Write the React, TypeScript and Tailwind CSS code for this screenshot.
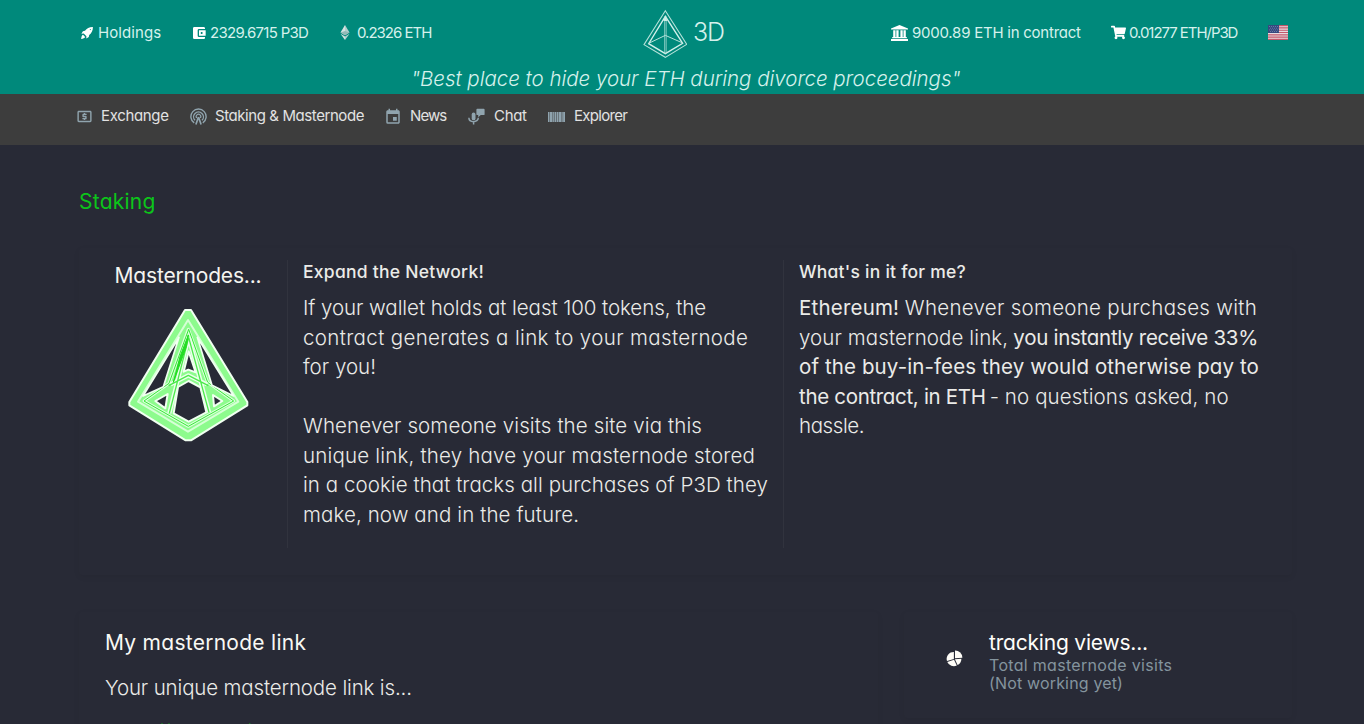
import type { ReactNode } from "react";
import { FaShoppingCart } from "react-icons/fa";
import { MdAccountBalanceWallet, MdEvent, MdLocalAtm } from "react-icons/md";

function RocketIcon() {
  return (
    <svg className="size-3 shrink-0" viewBox="0 0 12 12" fill="#fff">
      <path fillRule="evenodd" d="M11.900.1C8.500 0 5.700 1.400 4 3.800L1.900 4.200.4 6.700 2.700 6.600 5.400 9.300 5.300 11.600 7.800 10.100 8.200 8C10.600 6.300 12 3.500 11.900.1ZM9.300 2.100A.5.500 0 1 1 9.290 2.100Z" />
      <path d="M2 7.800C.8 8.300.4 9.800.1 11.900 2.200 11.600 3.700 11.200 4.200 10Z" />
    </svg>
  );
}

function BankIcon() {
  return (
    <svg className="h-[16px] w-[17px] shrink-0" viewBox="0 0 17 16" fill="#fff">
      <path d="M8.500 0 17 3.500V4.600H0V3.500ZM2.200 5.200H4.500V12H5.300V5.200H7.600V12H9.400V5.200H11.700V12H12.500V5.200H14.800V12H15.800V13.200H1.200V12H2.200ZM0 13.900H17V16H0Z" />
    </svg>
  );
}

function EthIcon() {
  return (
    <svg className="h-[15px] w-[10px] shrink-0" viewBox="0 0 10 15">
      <path d="M5 0 0.5 7.6 5 10.2Z" fill="#d5e3e2" />
      <path d="M5 0 9.500 7.600 5 10.200Z" fill="#b4d0ce" />
      <path d="M0.5 8.800 5 11.400V15Z" fill="#d5e3e2" />
      <path d="M9.500 8.800 5 11.400V15Z" fill="#b4d0ce" />
      <path d="M0.5 7.600 5 5.900 9.500 7.600 5 10.200Z" fill="#93bab7" />
    </svg>
  );
}

function PyramidLogo() {
  return (
    <svg className="h-[50px] w-[44px] shrink-0" viewBox="37 26 132 150" fill="none" stroke="#b5e2da" strokeLinejoin="miter">
      <path d="M104 31 40 133 104 171 168 132Z" strokeWidth="3.2" />
      <path d="M104 48 54 130 104 160 156 129Z" stroke="#d3f0eb" strokeWidth="4" />
      <path d="M102 48V160M106.500 48V160" strokeWidth="2.200" />
      <path d="M54 129 104 105 156 128" strokeWidth="3" />
      <path d="M98 62 104 46 110 62Z" fill="#cdeee8" stroke="none" />
    </svg>
  );
}

function FlagIcon() {
  return (
    <svg className="h-[15px] w-5 shrink-0" viewBox="0 0 20 15">
      <rect width="20" height="15" fill="#e9dbe0" />
      <path d="M0 .6H20M0 2.9H20M0 5.200H20M0 7.500H20M0 9.800H20M0 12.100H20M0 14.400H20" stroke="#c4586b" strokeWidth="1.15" />
      <rect width="11" height="8" fill="#36497f" />
      <path d="M1 1.500H10.500M2 3.200H10.500M1 4.900H10.500M2 6.500H10.500" stroke="#8b99be" strokeWidth=".6" strokeDasharray="1 1" />
    </svg>
  );
}

function BroadcastIcon() {
  return (
    <svg className="h-[17px] w-[17px] shrink-0" viewBox="0 0 17 17" fill="none" stroke="currentColor" strokeWidth="1.4">
      <path d="M4.200 14.900A7.600 7.600 0 1 1 12.800 14.900" />
      <path d="M5 12.300A4.900 4.900 0 1 1 12 12.300" />
      <path d="M6.700 10A2.300 2.300 0 1 1 10.300 10" strokeWidth="1.200" />
      <path d="M8.500 9 5.900 16.500M8.500 9 11.100 16.500" strokeWidth="1.700" />
    </svg>
  );
}

function VoiceChatIcon() {
  return (
    <svg className="h-[17px] w-[17px] shrink-0" viewBox="0 0 17 17" fill="currentColor">
      <rect x="3.700" y="4.500" width="3.800" height="7.800" rx="1.900" />
      <path d="M.9 9.800C.9 15 10.300 15 10.300 9.800M5.600 13.500V16.500" fill="none" stroke="currentColor" strokeWidth="1.500" />
      <path d="M9.300.8H15.700Q16.600.8 16.600 1.700V6.200Q16.600 7.100 15.700 7.100H12.800L10.200 9.300V7.100H9.300Q8.400 7.100 8.400 6.200V1.700Q8.400.8 9.300.8Z" />
    </svg>
  );
}

function BarcodeIcon() {
  return (
    <svg className="h-[10px] w-[17px] shrink-0" viewBox="0 0 17 10" fill="currentColor">
      <path d="M0 0H1V10H0ZM1.700 0H4.400V10H1.700ZM5.200 0H6.300V10H5.200ZM7 0H8.200V10H7ZM9 0H10V10H9ZM10.700 0H13V10H10.700ZM13.600 0H14.600V10H13.600ZM15.200 0H17V10H15.200Z" />
      <rect width="17" height="10" opacity=".35" />
    </svg>
  );
}

function PieIcon() {
  return (
    <svg className="h-[17px] w-[17px] shrink-0" viewBox="0 0 17 17" fill="#fffdf8">
      <path d="M7.900 1.900V9L1 11.100A7 7 0 0 1 7.900 1.900Z" />
      <path d="M9 .6A7.200 7.200 0 0 1 16.400 7.700L9 8.300Z" />
      <path d="M1.300 11.900 8 9.800 10.800 15.500A7.200 7.200 0 0 1 1.300 11.900Z" />
      <path d="M8.900 9.300 15.400 8.700A7.200 7.200 0 0 1 11.600 15Z" />
    </svg>
  );
}

function MasternodeEmblem() {
  return (
    <svg className="h-[136px] w-[122px]" viewBox="80 171 366 408" strokeLinejoin="round">
      <path
        fillRule="evenodd"
        fill="#8dfb8d"
        stroke="#f1fff1"
        strokeWidth="6"
        d="M254 180H272L441 456V466L272 571H256L87 466V456ZM265 304 250 365 264 359 286 367ZM265 393 300 412 318 487 265 515 220 490 233 411ZM165 453 202 432 195 475ZM338 435 341 469 366 453Z"
      />
      <g fill="none">
        <path d="M263 210 113 455 263 545 414 455Z" stroke="#d6ffd6" strokeWidth="6" />
        <path d="M264 238 206 400 131 453 264 529 400 453 322 397Z" stroke="#dcffdc" strokeWidth="9" />
        <path d="M265 238 206 400 131 453 264 529 400 453 322 397Z" stroke="#35e835" strokeWidth="3" />
        <path d="M265 262 207 490M265 262 326 487M211 403 264 376 320 403" stroke="#e9ffe9" strokeWidth="13" />
        <path d="M265 262 207 490M265 262 326 487M205 407 264 376 324 407" stroke="#4bea4b" strokeWidth="4" />
        <path d="M264 255 258 290 219 397 239 320Z" stroke="#23dc23" strokeWidth="3" fill="#23dc23" />
        <path d="M236 262 128 438 189 410ZM291 262 400 438 335 406Z" fill="#282a36" stroke="#f1fff1" strokeWidth="5" />
      </g>
    </svg>
  );
}

function Stat({ icon, className, children }: { icon: ReactNode; className: string; children: ReactNode }) {
  return <div className={`flex shrink-0 items-center whitespace-nowrap ${className}`}>{icon}{children}</div>;
}

export default function App() {
  return (
    <div className="h-[724px] w-[1364px] overflow-hidden bg-[#282a36] font-['Inter',sans-serif] text-[#ebebe8] [font-feature-settings:'cv11']">
      <header className="h-[94px] bg-[#00897b] text-[#d6f1ec]">
        <div className="flex h-[65px] items-center pl-[81px] text-[15px]">
          <div className="flex w-[562px] shrink-0 items-center">
            <Stat className="w-[111px] gap-[5px]" icon={<RocketIcon />}>
              <span className="pt-px tracking-[0.1px]">Holdings</span>
            </Stat>
            <Stat className="w-[148px] gap-[3px]" icon={<MdAccountBalanceWallet className="-ml-px size-4 text-white" />}>
              <span className="pt-px tracking-[-0.7px]">2329.6715 P3D</span>
            </Stat>
            <Stat className="gap-[7px]" icon={<EthIcon />}>
              <span className="pt-px tracking-[-0.99px]">0.2326 ETH</span>
            </Stat>
          </div>
          <div className="flex w-[248px] shrink-0 items-center gap-[6px] pt-[2px]">
            <PyramidLogo />
            <span className="pb-[2px] text-[25px] font-[350] tracking-[-1.2px]">3D</span>
          </div>
          <Stat className="w-[220px] gap-[4px]" icon={<BankIcon />}>
            <span className="pt-px tracking-[-0.24px]">9000.89 ETH in contract</span>
          </Stat>
          <Stat className="w-[157px] gap-[3px]" icon={<FaShoppingCart className="size-[15px] text-white" />}>
            <span className="pt-px tracking-[-1.05px]">0.01277 ETH/P3D</span>
          </Stat>
          <FlagIcon />
        </div>
        <p className="flex h-[28px] items-center pl-[411px] text-[20.5px] font-[350] italic tracking-[-0.02px] whitespace-nowrap">"Best place to hide your ETH during divorce proceedings"</p>
      </header>

      <nav className="flex h-[51px] items-center bg-[#3d3d3d] pb-[6px] pl-[76px] text-[15px] text-[#e2e2e2]">
        <Stat className="w-[114px] gap-[8px]" icon={<MdLocalAtm className="size-[17px] text-[#90a4ae]" />}><span className="tracking-[-0.33px]">Exchange</span></Stat>
        <Stat className="w-[194px] gap-[8px] text-[#90a4ae]" icon={<BroadcastIcon />}><span className="tracking-[-0.42px] text-[#e2e2e2]">Staking &amp; Masternode</span></Stat>
        <Stat className="w-[84px] gap-[8px]" icon={<MdEvent className="size-[18px] text-[#90a4ae]" />}><span className="tracking-[-0.9px]">News</span></Stat>
        <Stat className="w-[80px] gap-[9px] text-[#90a4ae]" icon={<VoiceChatIcon />}><span className="tracking-[-0.3px] text-[#e2e2e2]">Chat</span></Stat>
        <Stat className="gap-[9px] text-[#90a4ae]" icon={<BarcodeIcon />}><span className="tracking-[-0.69px] text-[#e2e2e2]">Explorer</span></Stat>
      </nav>

      <main className="pt-[41px] pr-[72px] pl-[79px]">
        <h1 className="h-8 text-[21px] leading-8 tracking-[0.25px] text-[#0cc51a]">Staking</h1>

        <section className="mt-[30px] flex h-[327px] rounded-sm pt-[12px] whitespace-nowrap shadow-[0_2px_6px_rgba(0,0,0,0.06)]">
          <div className="flex h-[288px] w-[209px] flex-col items-center border-r border-[#31333e] pl-[10px]">
            <h2 className="h-[32px] text-[21px] leading-[32px] tracking-[-0.18px] text-[#f4f4f0]">Masternodes...</h2>
            <div className="mt-[15px]"><MasternodeEmblem /></div>
          </div>
          <div className="h-[288px] w-[496px] border-r border-[#31333e] pl-[15px]">
            <h3 className="h-[33px] text-[17.5px] leading-[23px] font-[450] tracking-[0.26px]">Expand the Network!</h3>
            <div className="text-[20.5px] leading-[29.5px] font-light">
              <p className="tracking-[-0.06px]">If your wallet holds at least 100 tokens, the</p>
              <p className="tracking-[0.36px]">contract generates a link to your masternode</p>
              <p className="tracking-[0.02px]">for you!</p>
              <p className="mt-[29.5px] tracking-[0.12px]">Whenever someone visits the site via this</p>
              <p className="tracking-[0.19px]">unique link, they have your masternode stored</p>
              <p className="tracking-[0.06px]">in a cookie that tracks all purchases of P3D they</p>
              <p className="tracking-[0.1px]">make, now and in the future.</p>
            </div>
          </div>
          <div className="pl-[15px]">
            <h3 className="h-[33px] text-[17.5px] leading-[23px] font-[450] tracking-[0.24px]">What's in it for me?</h3>
            <div className="text-[20.5px] leading-[29.5px] font-light">
              <p className="flex justify-between"><b className="font-normal tracking-[0.2px]">Ethereum!</b><span className="mr-[2px] tracking-[0.28px]">Whenever someone purchases with</span></p>
              <p className="flex justify-between"><span className="tracking-[0.1px]">your masternode link,</span><b className="mr-px font-normal tracking-[-0.28px]">you instantly receive 33%</b></p>
              <p className="font-normal tracking-[0.105px]">of the buy-in-fees they would otherwise pay to</p>
              <p className="flex gap-[4px]"><b className="font-normal tracking-[-0.32px]">the contract, in ETH</b><span className="tracking-[0.1px]">- no questions asked, no</span></p>
              <p className="tracking-[-0.4px]">hassle.</p>
            </div>
          </div>
        </section>

        <div className="mt-[37px] flex gap-[26px] whitespace-nowrap">
          <section className="h-[160px] w-[799px] shrink-0 rounded-sm pt-[16px] pl-[26px] shadow-[0_2px_6px_rgba(0,0,0,0.06)]">
            <h2 className="h-[30px] text-[21px] leading-[30px] tracking-[0.27px] text-[#f8f8f4]">My masternode link</h2>
            <p className="mt-[15px] h-[30px] text-[20.5px] leading-[30px] font-light tracking-[-0.15px]">Your unique masternode link is...</p>
            <p className="mt-[14px] h-[30px] text-[20px] leading-[30px] font-light text-[#0cc51a]">https://powh.io/</p>
          </section>
          <section className="flex h-[106px] flex-1 rounded-sm pt-[16px] pl-[42px] shadow-[0_2px_6px_rgba(0,0,0,0.06)]">
            <div className="mt-[22px]"><PieIcon /></div>
            <div className="pl-[26px]">
              <h2 className="h-[30px] text-[21px] leading-[30px] tracking-[-0.2px] text-[#fffefa]">tracking views...</h2>
              <p className="-mt-px text-[16px] leading-[17.5px] text-[#84949e]"><span className="tracking-[0.31px]">Total masternode visits</span><br /><span className="tracking-[0.16px]">(Not working yet)</span></p>
            </div>
          </section>
        </div>
      </main>
    </div>
  );
}
